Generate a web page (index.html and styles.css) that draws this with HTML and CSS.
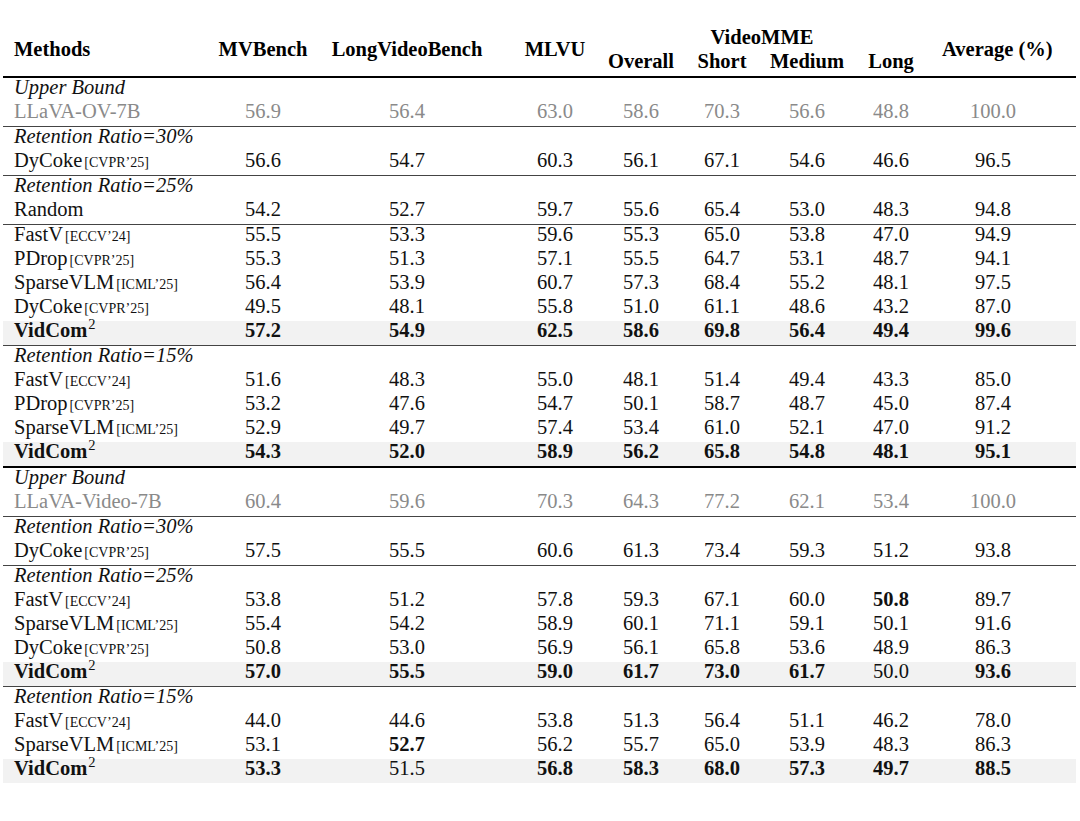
FILE: index.html
```html
<!DOCTYPE html>
<html>
<head>
<meta charset="utf-8">
<link rel="stylesheet" href="styles.css">
</head>
<body>
<div class="page">
<table class="results">
<colgroup>
<col class="c-method"><col class="c-mv"><col class="c-lvb"><col class="c-mlvu"><col class="c-overall"><col class="c-short"><col class="c-medium"><col class="c-long"><col class="c-avg">
</colgroup>
<thead>
<tr class="h1">
<th rowspan="2" class="th-method">Methods</th>
<th rowspan="2" class="th-mv">MVBench</th>
<th rowspan="2" class="th-lvb">LongVideoBench</th>
<th rowspan="2" class="th-mlvu">MLVU</th>
<th colspan="4" class="th-vmme">VideoMME</th>
<th rowspan="2" class="th-avg">Average (%)</th>
</tr>
<tr class="h2">
<th class="th-overall">Overall</th>
<th class="th-short">Short</th>
<th class="th-medium">Medium</th>
<th class="th-long">Long</th>
</tr>
</thead>
<tbody>
<tr class="sec"><td colspan="9">Upper Bound</td></tr>
<tr class="row base"><td>LLaVA-OV-7B</td><td>56.9</td><td>56.4</td><td>63.0</td><td>58.6</td><td>70.3</td><td>56.6</td><td>48.8</td><td>100.0</td></tr>
<tr class="sec rule"><td colspan="9">Retention Ratio=30%</td></tr>
<tr class="row"><td>DyCoke<span class="venue">[CVPR’25]</span></td><td>56.6</td><td>54.7</td><td>60.3</td><td>56.1</td><td>67.1</td><td>54.6</td><td>46.6</td><td>96.5</td></tr>
<tr class="sec rule"><td colspan="9">Retention Ratio=25%</td></tr>
<tr class="row"><td>Random</td><td>54.2</td><td>52.7</td><td>59.7</td><td>55.6</td><td>65.4</td><td>53.0</td><td>48.3</td><td>94.8</td></tr>
<tr class="row rule"><td>FastV<span class="venue">[ECCV’24]</span></td><td>55.5</td><td>53.3</td><td>59.6</td><td>55.3</td><td>65.0</td><td>53.8</td><td>47.0</td><td>94.9</td></tr>
<tr class="row"><td>PDrop<span class="venue">[CVPR’25]</span></td><td>55.3</td><td>51.3</td><td>57.1</td><td>55.5</td><td>64.7</td><td>53.1</td><td>48.7</td><td>94.1</td></tr>
<tr class="row"><td>SparseVLM<span class="venue">[ICML’25]</span></td><td>56.4</td><td>53.9</td><td>60.7</td><td>57.3</td><td>68.4</td><td>55.2</td><td>48.1</td><td>97.5</td></tr>
<tr class="row"><td>DyCoke<span class="venue">[CVPR’25]</span></td><td>49.5</td><td>48.1</td><td>55.8</td><td>51.0</td><td>61.1</td><td>48.6</td><td>43.2</td><td>87.0</td></tr>
<tr class="row ours"><td><b>VidCom<sup class="sup">2</sup></b></td><td><b>57.2</b></td><td><b>54.9</b></td><td><b>62.5</b></td><td><b>58.6</b></td><td><b>69.8</b></td><td><b>56.4</b></td><td><b>49.4</b></td><td><b>99.6</b></td></tr>
<tr class="sec rule"><td colspan="9">Retention Ratio=15%</td></tr>
<tr class="row"><td>FastV<span class="venue">[ECCV’24]</span></td><td>51.6</td><td>48.3</td><td>55.0</td><td>48.1</td><td>51.4</td><td>49.4</td><td>43.3</td><td>85.0</td></tr>
<tr class="row"><td>PDrop<span class="venue">[CVPR’25]</span></td><td>53.2</td><td>47.6</td><td>54.7</td><td>50.1</td><td>58.7</td><td>48.7</td><td>45.0</td><td>87.4</td></tr>
<tr class="row"><td>SparseVLM<span class="venue">[ICML’25]</span></td><td>52.9</td><td>49.7</td><td>57.4</td><td>53.4</td><td>61.0</td><td>52.1</td><td>47.0</td><td>91.2</td></tr>
<tr class="row ours"><td><b>VidCom<sup class="sup">2</sup></b></td><td><b>54.3</b></td><td><b>52.0</b></td><td><b>58.9</b></td><td><b>56.2</b></td><td><b>65.8</b></td><td><b>54.8</b></td><td><b>48.1</b></td><td><b>95.1</b></td></tr>
<tr class="sec thick"><td colspan="9">Upper Bound</td></tr>
<tr class="row base"><td>LLaVA-Video-7B</td><td>60.4</td><td>59.6</td><td>70.3</td><td>64.3</td><td>77.2</td><td>62.1</td><td>53.4</td><td>100.0</td></tr>
<tr class="sec rule"><td colspan="9">Retention Ratio=30%</td></tr>
<tr class="row"><td>DyCoke<span class="venue">[CVPR’25]</span></td><td>57.5</td><td>55.5</td><td>60.6</td><td>61.3</td><td>73.4</td><td>59.3</td><td>51.2</td><td>93.8</td></tr>
<tr class="sec rule"><td colspan="9">Retention Ratio=25%</td></tr>
<tr class="row"><td>FastV<span class="venue">[ECCV’24]</span></td><td>53.8</td><td>51.2</td><td>57.8</td><td>59.3</td><td>67.1</td><td>60.0</td><td><b>50.8</b></td><td>89.7</td></tr>
<tr class="row"><td>SparseVLM<span class="venue">[ICML’25]</span></td><td>55.4</td><td>54.2</td><td>58.9</td><td>60.1</td><td>71.1</td><td>59.1</td><td>50.1</td><td>91.6</td></tr>
<tr class="row"><td>DyCoke<span class="venue">[CVPR’25]</span></td><td>50.8</td><td>53.0</td><td>56.9</td><td>56.1</td><td>65.8</td><td>53.6</td><td>48.9</td><td>86.3</td></tr>
<tr class="row ours"><td><b>VidCom<sup class="sup">2</sup></b></td><td><b>57.0</b></td><td><b>55.5</b></td><td><b>59.0</b></td><td><b>61.7</b></td><td><b>73.0</b></td><td><b>61.7</b></td><td>50.0</td><td><b>93.6</b></td></tr>
<tr class="sec rule"><td colspan="9">Retention Ratio=15%</td></tr>
<tr class="row"><td>FastV<span class="venue">[ECCV’24]</span></td><td>44.0</td><td>44.6</td><td>53.8</td><td>51.3</td><td>56.4</td><td>51.1</td><td>46.2</td><td>78.0</td></tr>
<tr class="row"><td>SparseVLM<span class="venue">[ICML’25]</span></td><td>53.1</td><td><b>52.7</b></td><td>56.2</td><td>55.7</td><td>65.0</td><td>53.9</td><td>48.3</td><td>86.3</td></tr>
<tr class="row ours"><td><b>VidCom<sup class="sup">2</sup></b></td><td><b>53.3</b></td><td>51.5</td><td><b>56.8</b></td><td><b>58.3</b></td><td><b>68.0</b></td><td><b>57.3</b></td><td><b>49.7</b></td><td><b>88.5</b></td></tr>
</tbody>
</table>
</div>
</body>
</html>
```
FILE: styles.css
```css
html, body {
  margin: 0;
  padding: 0;
  background: #ffffff;
}

.page {
  padding: 28px 0 0 3px;
  font-family: "Liberation Serif", "Times New Roman", serif;
  font-size: 20.5px;
  color: #111111;
}

.results {
  width: 1073px;
  table-layout: fixed;
  border-collapse: separate;
  border-spacing: 0;
}

.c-method { width: 188px; }
.c-mv { width: 139px; }
.c-lvb { width: 156px; }
.c-mlvu { width: 112px; }
.c-overall { width: 84px; }
.c-short { width: 82px; }
.c-medium { width: 85px; }
.c-long { width: 93px; }
.c-avg { width: 134px; }

.results th,
.results td {
  padding: 0 0 5px 0;
  line-height: 19px;
  height: 19px;
  white-space: nowrap;
  text-align: center;
  vertical-align: middle;
}

.results th {
  font-weight: bold;
  color: #000000;
}

.h2 th,
.h1 th[rowspan] {
  border-bottom: 2px solid #000000;
}

.th-method { text-align: left !important; padding-left: 11px !important; }
.th-mv { padding-left: 5px !important; }
.th-lvb { padding-right: 2px !important; }
.th-mlvu { padding-left: 26px !important; }
.th-vmme { padding-right: 16px !important; }
.th-overall { padding-left: 2px !important; }
.th-short { padding-right: 2px !important; }
.th-medium { padding-left: 1px !important; }
.th-long { padding-right: 9px !important; }
.th-avg { padding-right: 38px !important; }

.row td:nth-child(1) { text-align: left; padding-left: 11px; }
.row td:nth-child(2) { padding-left: 5px; }
.row td:nth-child(3) { padding-right: 2px; }
.row td:nth-child(4) { padding-left: 26px; }
.row td:nth-child(5) { padding-left: 2px; }
.row td:nth-child(6) { padding-right: 2px; }
.row td:nth-child(7) { padding-left: 1px; }
.row td:nth-child(8) { padding-right: 9px; }
.row td:nth-child(9) { padding-right: 32px; }

.sec td {
  text-align: left;
  padding-left: 11px;
  font-style: italic;
}

.rule td {
  border-top: 1px solid #444444;
}

.thick td {
  border-top: 2px solid #000000;
}

.base td {
  color: #8a8a8a;
}

.ours td {
  background: #f2f2f2;
}

.venue {
  font-size: 14px;
  line-height: 0;
  margin-left: 2px;
}

.sup {
  font-size: 14.5px;
  font-weight: normal;
  line-height: 0;
  vertical-align: 8px;
  margin-left: 1px;
}
```
